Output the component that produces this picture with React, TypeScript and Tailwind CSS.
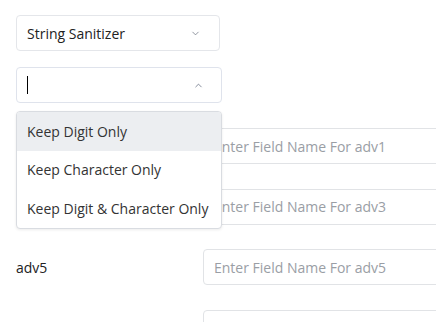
import { ChevronDown, ChevronUp } from "lucide-react";

const rows = ["adv1", "adv3", "adv5", "adv7"];
const options = ["Keep Digit Only", "Keep Character Only", "Keep Digit & Character Only"];

export default function App() {
  return (
    <div
      className="relative w-[436px] h-[322px] overflow-hidden bg-white pl-4 pt-[15px] text-[14px] text-[#333]"
      style={{ fontFamily: '"Open Sans", "Noto Sans", sans-serif' }}
    >
      {/* type select */}
      <div className="flex items-center justify-between w-[204px] h-[36px] rounded border border-[#e4e6ea] pl-[10px] pr-[18px] text-[#222]">
        <span>String Sanitizer</span>
        <ChevronDown size={11} strokeWidth={1.6} className="text-[#6b7280]" />
      </div>

      {/* searchable select, open */}
      <div className="mt-4 flex items-center justify-between w-[206px] h-[36px] rounded border border-[#dfe3ec] pl-[10px] pr-[17px]">
        <span className="w-px h-[18px] bg-black" />
        <ChevronUp size={11} strokeWidth={1.6} className="text-[#5b6478]" />
      </div>

      {/* field rows */}
      <div className="mt-[25px] flex flex-col gap-[24.5px]">
        {rows.map((r) => (
          <div key={r} className="flex items-center h-[36px]">
            <span className="w-[187px] shrink-0 text-[#222]">{r}</span>
            <div className="flex items-center w-[260px] shrink-0 h-full rounded border border-[#e1e3e6] px-[10px] text-[#9a9ea5]">
              Enter Field Name For {r}
            </div>
          </div>
        ))}
      </div>

      {/* dropdown menu */}
      <div className="absolute left-4 top-[111px] w-[206px] rounded border border-[#d9dce1] bg-white shadow-[0_1px_3px_rgba(0,0,0,0.08)] overflow-hidden">
        {options.map((o, i) => (
          <div
            key={o}
            className={`flex items-center h-[38.5px] px-[10px] text-[#333] ${i === 0 ? "bg-[#eceef1]" : ""}`}
          >
            {o}
          </div>
        ))}
      </div>
    </div>
  );
}
